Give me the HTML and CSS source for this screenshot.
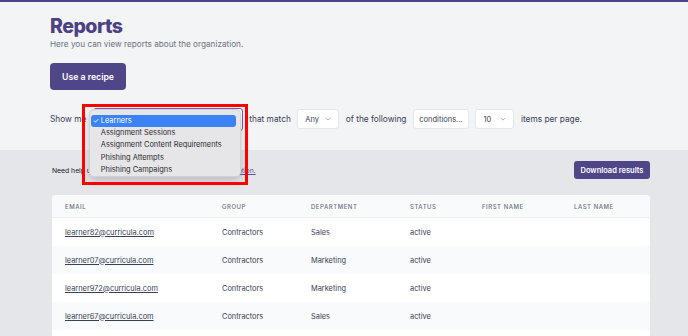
FILE: index.html
```html
<!DOCTYPE html>
<html lang="en">
<head>
    <meta charset="UTF-8">
    <meta name="viewport" content="width=device-width, initial-scale=1.0">
    <title>Reports</title>
    <link rel="stylesheet" href="styles.css">
</head>
<body>
    <div class="topbar"></div>

    <section class="intro">
        <h1 class="title">Reports</h1>
        <p class="subtitle">Here you can view reports about the organization.</p>
        <button class="btn btn-recipe">Use a recipe</button>

        <div class="filters">
            <span>Show me</span>
            <div class="type-select">
                <div class="select select-type"></div>
                <ul class="menu">
                    <li class="active"><span class="check">✓</span>Learners</li>
                    <li>Assignment Sessions</li>
                    <li>Assignment Content Requirements</li>
                    <li>Phishing Attempts</li>
                    <li>Phishing Campaigns</li>
                </ul>
                <div class="annotation"></div>
            </div>
            <span>that match</span>
            <div class="select select-any">Any
                <svg class="chevron" viewBox="0 0 8 5"><polyline points="1,1 4,4 7,1"/></svg>
            </div>
            <span>of the following</span>
            <button class="select select-btn">conditions...</button>
            <div class="select select-count">10
                <svg class="chevron" viewBox="0 0 8 5"><polyline points="1,1 4,4 7,1"/></svg>
            </div>
            <span>items per page.</span>
        </div>
    </section>

    <section class="results">
        <div class="results-bar">
            <p class="help">Need help using the reports? Take a look at our <a href="#">documentation.</a></p>
            <button class="btn btn-download">Download results</button>
        </div>

        <div class="card">
            <table class="report-table">
                <colgroup>
                    <col style="width: 157px">
                    <col style="width: 89px">
                    <col style="width: 99px">
                    <col style="width: 72px">
                    <col style="width: 92px">
                    <col>
                </colgroup>
                <thead>
                    <tr>
                        <th>Email</th>
                        <th>Group</th>
                        <th>Department</th>
                        <th>Status</th>
                        <th>First name</th>
                        <th>Last name</th>
                    </tr>
                </thead>
                <tbody>
                    <tr>
                        <td><a href="#">learner82@curricula.com</a></td>
                        <td>Contractors</td>
                        <td>Sales</td>
                        <td>active</td>
                        <td></td>
                        <td></td>
                    </tr>
                    <tr>
                        <td><a href="#">learner07@curricula.com</a></td>
                        <td>Contractors</td>
                        <td>Marketing</td>
                        <td>active</td>
                        <td></td>
                        <td></td>
                    </tr>
                    <tr>
                        <td><a href="#">learner972@curricula.com</a></td>
                        <td>Contractors</td>
                        <td>Marketing</td>
                        <td>active</td>
                        <td></td>
                        <td></td>
                    </tr>
                    <tr>
                        <td><a href="#">learner67@curricula.com</a></td>
                        <td>Contractors</td>
                        <td>Sales</td>
                        <td>active</td>
                        <td></td>
                        <td></td>
                    </tr>
                </tbody>
            </table>
        </div>
    </section>
</body>
</html>
```

FILE: styles.css
```css
html, body {
    height: 336px;
    overflow: hidden;
}

body {
    margin: 0;
    font-family: Inter, "Helvetica Neue", Arial, sans-serif;
    background-color: #e5e6ea;
    color: #1f2937;
}

.topbar {
    height: 2px;
    background-color: #4d4486;
}

.intro {
    background-color: #f3f4f6;
    height: 148px;
    box-sizing: border-box;
    padding: 12px 50px 0;
}

.title {
    margin: 0;
    font-size: 19.5px;
    line-height: 24px;
    font-weight: 800;
    letter-spacing: -0.5px;
    color: #4b4183;
}

.subtitle {
    margin: 0;
    font-size: 8.2px;
    line-height: 12px;
    color: #6b7280;
}

.btn {
    font-family: inherit;
    border: none;
    color: white;
    background-color: #4f4688;
    cursor: pointer;
    font-weight: 600;
}

.btn-recipe {
    display: block;
    margin-top: 13px;
    width: 76px;
    height: 27px;
    padding: 0;
    border-radius: 4px;
    font-size: 8.7px;
}

/* filter sentence */
.filters {
    display: flex;
    align-items: center;
    gap: 6.5px;
    margin-top: 18px;
    height: 22px;
    font-size: 8.3px;
    color: #374151;
}

.select {
    box-sizing: border-box;
    display: flex;
    align-items: center;
    justify-content: space-between;
    height: 20px;
    padding: 0 7px;
    background-color: white;
    border: 1px solid #e5e7eb;
    border-radius: 3px;
    font-family: inherit;
    font-size: 7.5px;
    color: #374151;
}

.chevron {
    width: 6px;
    height: 4px;
    fill: none;
    stroke: #9ca3af;
    stroke-width: 1.2;
}

.select-any {
    width: 42px;
}

.select-count {
    width: 39px;
}

.select-btn {
    width: 56px;
    justify-content: center;
    padding: 0;
}

.type-select {
    position: relative;
}

.select-type {
    width: 150px;
    height: 23px;
    border: 1px solid #6b61a6;
}

.menu {
    position: absolute;
    left: -4px;
    top: 1px;
    width: 152px;
    height: 68px;
    box-sizing: border-box;
    margin: 0;
    padding: 5px 4px 5px 1px;
    list-style: none;
    background-color: #e6e5e8;
    border: 1px solid #d2d1d5;
    border-radius: 5px;
    box-shadow: 0 4px 10px rgba(0, 0, 0, 0.18);
    font-size: 7.4px;
    color: #2b2b2e;
}

.menu li {
    height: 12.4px;
    line-height: 12.4px;
    padding-left: 10px;
    border-radius: 3px;
    white-space: nowrap;
}

.menu li.active {
    background-color: #3a82f5;
    color: white;
    padding-left: 0;
}

.check {
    display: inline-block;
    width: 10px;
    text-align: center;
    font-size: 7px;
}

.annotation {
    position: absolute;
    left: -11px;
    top: -4px;
    width: 166px;
    height: 81px;
    box-sizing: border-box;
    border: 3px solid #ff0000;
}

/* results */
.results {
    padding: 11px 38px 0 52px;
}

.results-bar {
    display: flex;
    align-items: center;
    justify-content: space-between;
    height: 18px;
}

.help {
    margin: 0;
    font-size: 6.8px;
    color: #111827;
}

.help a {
    color: #5a5196;
}

.btn-download {
    height: 18px;
    width: 76px;
    padding: 0;
    border-radius: 3px;
    font-size: 7.5px;
}

.card {
    margin-top: 16px;
    min-height: 160px;
    background-color: white;
    border-radius: 4px;
    overflow: hidden;
}

.report-table {
    width: 100%;
    border-collapse: collapse;
    table-layout: fixed;
}

.report-table th {
    height: 22px;
    padding: 0 0 0 13px;
    text-align: left;
    font-size: 6px;
    font-weight: 500;
    letter-spacing: 0.09em;
    text-transform: uppercase;
    color: #6b7280;
    background-color: #f9fafb;
    border-bottom: 1px solid #eceef1;
}

.report-table td {
    height: 28px;
    padding: 0 0 0 13px;
    font-size: 7.4px;
    color: #374151;
}

.report-table tbody tr:nth-child(even) td {
    background-color: #f9fafb;
}

.report-table td a {
    color: #374151;
}
```
